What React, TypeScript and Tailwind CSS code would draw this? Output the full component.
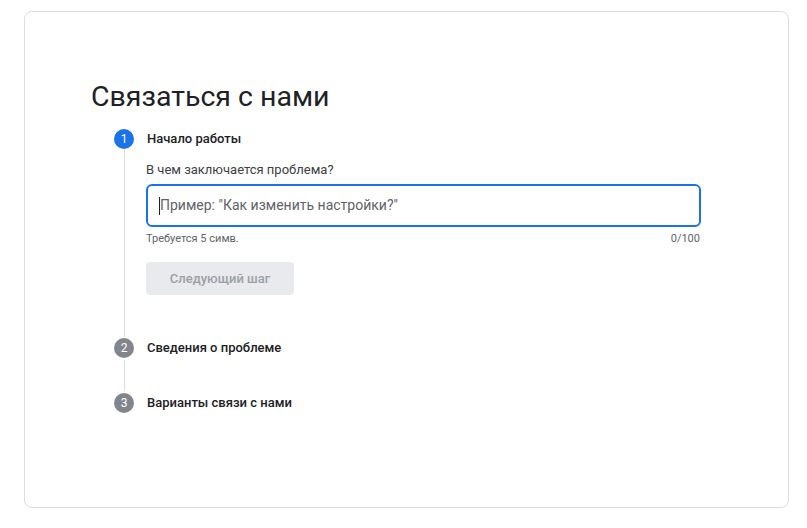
import React from 'react';

const steps = [
  { n: 2, label: 'Сведения о проблеме' },
  { n: 3, label: 'Варианты связи с нами' },
];

const StepBadge: React.FC<{ n: number; active?: boolean }> = ({ n, active }) => (
  <div
    className={`w-5 h-5 rounded-full flex items-center justify-center text-[12px] text-white shrink-0 ${
      active ? 'bg-[#1a73e8]' : 'bg-[#80868b]'
    }`}
  >
    {n}
  </div>
);

const App: React.FC = () => {
  return (
    <div className="w-[807px] h-[528px] bg-white pt-[11px] pl-[24px] font-['Roboto',sans-serif]">
      <div className="w-[765px] h-[497px] border border-[#dadce0] rounded-lg pl-[66px] pt-[67px]">
        <h1 className="text-[28.5px] leading-[36px] text-[#202124] font-normal">Связаться с нами</h1>

        <div className="ml-[23px] mt-[14px]">
          {/* step 1 */}
          <div className="flex items-center gap-[13px] h-5">
            <StepBadge n={1} active />
            <span className="text-[13px] font-medium text-[#202124]">Начало работы</span>
          </div>
          <div className="flex">
            <div className="w-5 flex justify-center py-[1px]">
              <div className="w-px bg-[#dadce0]" />
            </div>
            <div className="pl-[12px] pt-[12px] pb-[43px]">
              <div className="text-[13px] leading-[18px] text-[#3c4043]">В чем заключается проблема?</div>
              <div className="mt-[5px] w-[555px] h-[43px] border-2 border-[#1a73e8] rounded-md flex items-center pl-[11px]">
                <span className="w-px h-[18px] bg-[#202124]" />
                <span className="text-[14px] text-[#5f6368]">Пример: "Как изменить настройки?"</span>
              </div>
              <div className="flex justify-between w-[554px] mt-[5px] text-[11px] leading-[14px] text-[#5f6368]">
                <span>Требуется 5 симв.</span>
                <span>0/100</span>
              </div>
              <button className="mt-[16px] w-[148px] h-[33px] rounded bg-[#e8eaed] text-[13px] font-medium text-[#9aa0a6]">
                Следующий шаг
              </button>
            </div>
          </div>

          {steps.map((s, i) => (
            <div key={s.n}>
              <div className="flex items-center gap-[13px] h-5">
                <StepBadge n={s.n} />
                <span className="text-[13px] font-medium text-[#202124]">{s.label}</span>
              </div>
              {i < steps.length - 1 && (
                <div className="w-5 flex justify-center h-[35px] py-[2px]">
                  <div className="w-px bg-[#dadce0]" />
                </div>
              )}
            </div>
          ))}
        </div>
      </div>
    </div>
  );
};

export default App;
